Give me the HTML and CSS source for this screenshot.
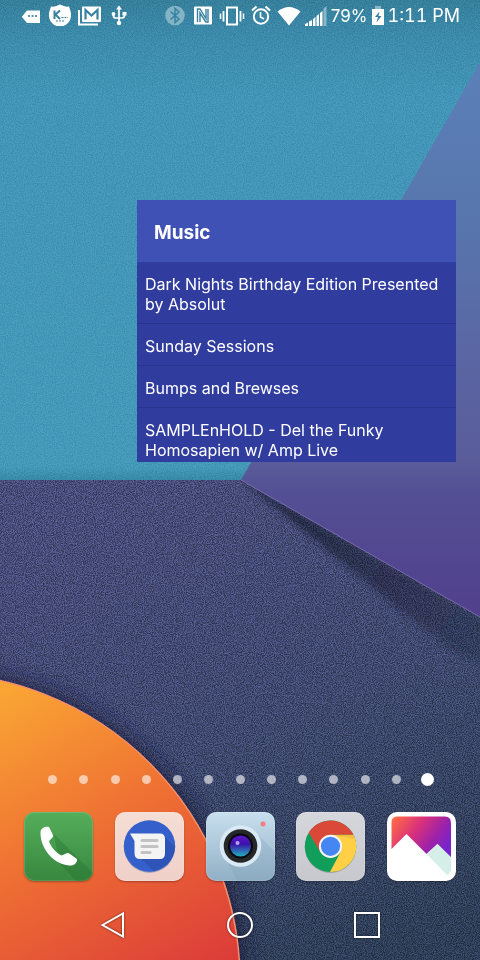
FILE: index.html
```html
<!DOCTYPE html>
<html lang="en">
<head>
<meta charset="utf-8">
<meta name="viewport" content="width=device-width, initial-scale=1">
<title>Home screen</title>
<link rel="stylesheet" href="styles.css">
</head>
<body>
<svg class="wallpaper" viewBox="0 0 480 960" preserveAspectRatio="xMidYMid slice" aria-hidden="true">
  <defs>
    <linearGradient id="teal" x1="0" y1="0" x2="0" y2="1">
      <stop offset="0" stop-color="#367f9b"/><stop offset=".08" stop-color="#3c8bac"/><stop offset=".2" stop-color="#4295b6"/><stop offset=".97" stop-color="#4499b9"/><stop offset="1" stop-color="#3788a5"/>
    </linearGradient>
    <linearGradient id="purple" gradientUnits="userSpaceOnUse" x1="0" y1="62" x2="0" y2="617">
      <stop offset="0" stop-color="#5b80b8"/><stop offset=".3" stop-color="#5875ad"/><stop offset=".55" stop-color="#5a65a2"/><stop offset=".72" stop-color="#5a5c9a"/><stop offset=".77" stop-color="#545095"/><stop offset="1" stop-color="#513f8c"/>
    </linearGradient>
    <linearGradient id="navy" gradientUnits="userSpaceOnUse" x1="160" y1="480" x2="360" y2="960">
      <stop offset="0" stop-color="#484c79"/><stop offset=".5" stop-color="#3f496f"/><stop offset="1" stop-color="#2e3e57"/>
    </linearGradient>
    <linearGradient id="orange" gradientUnits="userSpaceOnUse" x1="0" y1="690" x2="170" y2="990">
      <stop offset="0" stop-color="#faa634"/><stop offset=".5" stop-color="#ee6e33"/><stop offset="1" stop-color="#dc3d39"/>
    </linearGradient>
    <linearGradient id="cast" gradientUnits="userSpaceOnUse" x1="260" y1="500" x2="480" y2="650">
      <stop offset="0" stop-color="#1c2038" stop-opacity=".85"/><stop offset="1" stop-color="#20253d" stop-opacity=".35"/>
    </linearGradient>
    <filter id="soft3" x="-20%" y="-20%" width="140%" height="140%"><feGaussianBlur stdDeviation="3"/></filter>
    <filter id="soft12" x="-20%" y="-20%" width="140%" height="140%"><feGaussianBlur stdDeviation="10"/></filter>
    <filter id="grain" x="0" y="0" width="100%" height="100%" color-interpolation-filters="sRGB">
      <feTurbulence type="fractalNoise" baseFrequency=".9" numOctaves="2" seed="4"/>
      <feColorMatrix values="2.600 0 0 0 -.8  2.600 0 0 0 -.8  2.600 0 0 0 -.8  0 0 0 0 1"/>
    </filter>
    <clipPath id="lower"><path d="M0 480H241L480 617V960H0Z"/></clipPath>
  </defs>
  <rect width="480" height="481" fill="url(#teal)"/>
  <rect class="grain-light" width="480" height="480" filter="url(#grain)"/>
  <rect y="480" width="480" height="480" fill="url(#navy)"/>
  <g clip-path="url(#lower)">
    <path d="M241 480L500 628V670L460 655L400 610L330 552L285 515Z" fill="url(#cast)" filter="url(#soft3)"/>
    <circle cx="-66" cy="981" r="312" fill="#171d38" fill-opacity=".75" filter="url(#soft12)"/>
  </g>
  <rect class="grain-dark" y="480" width="480" height="480" filter="url(#grain)"/>
  <path d="M480 62L241 480L480 617Z" fill="url(#purple)"/>
  <path d="M241 480L480 617" stroke="#7a68ab" fill="none"/>
  <circle cx="-68" cy="981" r="308" fill="url(#orange)" stroke="#f2906c" stroke-width="1.500"/>
</svg>

<div class="phone">
  <header class="status">
    <div class="status-group notices">
      <svg width="20" height="24" viewBox="0 0 20 24" aria-hidden="true"><path d="M5 8.500H18V21H5L0 15V14.500Z" fill="#fff"/><g fill="#38829f"><circle cx="7" cy="14" r="1.100"/><circle cx="10.500" cy="14" r="1.100"/><circle cx="14" cy="14" r="1.100"/></g></svg>
      <svg width="24" height="24" viewBox="0 0 24 24" aria-hidden="true"><path d="M3 4.500C6 5 9 4 12 2.500C15 4 18 5 21 4.500L22.500 9C25 18 19 24.500 12 24.500S-1 18 1.500 9Z" fill="#fff"/><g fill="none" stroke="#38829f"><path d="M6.500 8.500V17M12 8.500L7.500 12.500L12 17" stroke-width="2"/><path d="M13.500 15.500H20M8 19H17" stroke-width="1.200" stroke-dasharray="2 1"/></g></svg>
      <svg width="24" height="24" viewBox="0 0 24 24" aria-hidden="true"><path d="M1 8V22.500H20" fill="none" stroke="#fff" stroke-width="2"/><rect x="4" y="4.500" width="19" height="15.500" rx="1" fill="#fff"/><path d="M7.500 17.500V8L13.500 13.500L19.500 8V17.500" fill="none" stroke="#38829f" stroke-width="2.200"/></svg>
      <svg width="22" height="24" viewBox="0 0 22 24" aria-hidden="true"><g fill="none" stroke="#fff" stroke-width="1.700"><path d="M11 6V22M5.500 12V14Q5.500 16 8 16H14Q16.500 16 16.500 13V11"/></g><path d="M11 3.500L14 7.500H8Z" fill="#fff"/><circle cx="5.500" cy="12" r="1.900" fill="#fff"/><path d="M14.500 10H18.500V13.500H14.500Z" fill="#fff"/><circle cx="11" cy="21" r="2.200" fill="#fff"/></svg>
    </div>
    <div class="status-group readings">
      <svg width="24" height="24" viewBox="0 0 24 24" aria-hidden="true"><circle cx="12" cy="13.500" r="9.800" fill="#82b3c7"/><path d="M7.500 9.500L16 17L12 20.500V6.500L16 10L7.500 17.500" fill="none" stroke="#38829f" stroke-width="1.500"/></svg>
      <svg width="24" height="24" viewBox="0 0 24 24" aria-hidden="true"><rect x="3" y="4.500" width="18" height="18" rx="1" fill="#fff"/><path d="M6.500 20V7H9L15 16.500V7M17 7V20H14.800L9 11V20" fill="none" stroke="#38829f" stroke-width="1.400"/></svg>
      <svg width="26" height="24" viewBox="0 0 26 24" aria-hidden="true"><g fill="none" stroke="#fff"><rect x="8" y="5.500" width="10" height="17" stroke-width="2"/><path d="M4.500 9V19.500M21.500 9V19.500" stroke-width="1.800"/><path d="M1.500 11.500V17M24.500 11.500V17" stroke-width="1.500"/></g></svg>
      <svg width="24" height="24" viewBox="0 0 24 24" aria-hidden="true"><g fill="none" stroke="#fff"><circle cx="12" cy="14.500" r="7.200" stroke-width="2"/><path d="M11.500 10V15L15 17" stroke-width="1.600"/><path d="M3 8.500L7.500 4.500M21 8.500L16.500 4.500" stroke-width="2"/></g></svg>
      <svg width="24" height="24" viewBox="0 0 24 24" aria-hidden="true"><path d="M.5 9.500Q12 .5 23.500 9.500L12 23.500Z" fill="#fff"/></svg>
      <svg width="22" height="24" viewBox="0 0 22 24" aria-hidden="true"><path d="M0 24V22L3 20.500V24ZM4 24V19.500L7 18V24ZM8 24V17L10.500 15V24ZM11.500 24V14L14 12V24ZM15 24V11L17.500 9V24Z" fill="#fff"/><path d="M18.500 24V6.500L21.500 4V24Z" fill="#8ab8ca"/></svg>
      <span>79%</span>
      <svg width="12" height="24" viewBox="1 0 12 24" aria-hidden="true"><path d="M4 4H10V7H4Z" fill="#8ab8ca"/><path d="M1 7H13V23H1Z" fill="#fff"/><path d="M8.500 9.500L4 15H7L5.500 20.500L10.500 14H7.500Z" fill="#38829f"/></svg>
      <time>1:11 PM</time>
    </div>
  </header>

  <main class="desktop">
    <section class="widget" aria-labelledby="widget-title">
      <h1 id="widget-title">Music</h1>
      <ul>
        <li>Dark Nights Birthday Edition Presented by Absolut</li>
        <li>Sunday Sessions</li>
        <li>Bumps and Brewses</li>
        <li>SAMPLEnHOLD - Del the Funky Homosapien w/ Amp Live</li>
      </ul>
    </section>
  </main>

  <div class="pages">
    <i></i><i></i><i></i><i></i><i></i><i></i><i></i><i></i><i></i><i></i><i></i><i></i><i class="current"></i>
  </div>

  <div class="dock">
    <button type="button" class="app phone-app" aria-label="Phone">
      <svg viewBox="0 0 69 69"><path d="M30 22L69 61V69H52L35 51Z" fill="#226f30" opacity=".35"/><path d="M16.500 20C17 16 21 14 25 15L29 23Q29.500 25 27.500 26.500L25 29C27 36 33 41 37.500 43.500L42 41.500Q44 40.500 46 42L53 47C53.500 51 50 54 45 53.500C29 52 16 36 16.500 20Z" fill="#fff"/></svg>
    </button>
    <button type="button" class="app messages-app" aria-label="Messages">
      <svg viewBox="0 0 69 69"><circle cx="34.500" cy="35" r="25.700" fill="#2a50a8" opacity=".45"/><circle cx="34.500" cy="34" r="25.700" fill="#3560cb"/><path d="M49 24L60 35Q58 54 39 59L25 46Z" fill="#284da9" opacity=".6"/><path d="M15 21.500H45Q50 21.500 50 27V41Q50 47 45 47H25Q19.500 47 19.500 41V29Z" fill="#f4f4f4"/><path d="M27 28.500H42M27 34.500H42M27 40.500H35" stroke="#c2c2c2" stroke-width="3.200" stroke-linecap="round"/></svg>
    </button>
    <button type="button" class="app camera-app" aria-label="Camera">
      <svg viewBox="0 0 69 69"><defs><linearGradient id="lens" x1="0" y1="0" x2="0" y2="1"><stop offset="0" stop-color="#6015cf"/><stop offset=".4" stop-color="#3b12aa"/><stop offset="1" stop-color="#22b2c0"/></linearGradient></defs><path d="M51 22L69 40V69H32L20 48Z" fill="#7c9db6" opacity=".25"/><circle cx="34.500" cy="34" r="20.800" fill="#d9eaf4"/><circle cx="34.500" cy="34" r="16.800" fill="#262729"/><circle cx="34.500" cy="34" r="12.500" fill="#08080e"/><circle cx="34.500" cy="34" r="10.500" fill="url(#lens)"/><circle cx="31.500" cy="31" r="2" fill="#b9a3ef"/><circle cx="57" cy="12" r="2.500" fill="#f37d80"/></svg>
    </button>
    <button type="button" class="app chrome-app" aria-label="Chrome">
      <svg viewBox="0 0 69 69"><circle cx="34.500" cy="35.200" r="25.700" fill="#777" opacity=".5"/><circle cx="34.500" cy="34.300" r="25.700" fill="#119e5b"/><path d="M34.500 22.700H57.500A25.700 25.700 0 0 1 34 60L44.500 40Z" fill="#ffcf45"/><path d="M12.700 20.700A25.700 25.700 0 0 1 57.500 22.700H34.500L24 39.500Z" fill="#da4838"/><path d="M35 22.700H57.500L59 27Z" fill="#d8a83d" opacity=".4"/><circle cx="34.500" cy="34.300" r="11.600" fill="#f4f4f4"/><circle cx="34.500" cy="34.300" r="9.600" fill="#4586f3"/></svg>
    </button>
    <button type="button" class="app gallery-app" aria-label="Gallery">
      <svg viewBox="0 0 69 69"><defs><linearGradient id="dusk" x1="0" y1=".1" x2="1" y2=".6"><stop offset="0" stop-color="#ff6b45"/><stop offset=".42" stop-color="#d8307c"/><stop offset=".75" stop-color="#9c22a9"/><stop offset="1" stop-color="#7824cb"/></linearGradient></defs><path d="M4.500 37V10Q4.500 4.500 11 4.500H58Q64 4.500 64 11V46L50.500 32L39.500 42L19.500 22Z" fill="url(#dusk)"/><path d="M39.500 42L50.500 32L64 45V58Q63 62 60 63Z" fill="#d6eee8"/></svg>
    </button>
  </div>

  <nav class="softkeys" aria-label="System">
    <button type="button" aria-label="Back"><svg viewBox="0 0 30 30"><path d="M4.500 15L25 3.500V26.500Z"/></svg></button>
    <button type="button" aria-label="Home"><svg viewBox="0 0 30 30"><circle cx="15" cy="15" r="12"/></svg></button>
    <button type="button" aria-label="Recent apps"><svg viewBox="0 0 30 30"><rect x="3" y="3" width="24" height="24"/></svg></button>
  </nav>
</div>
</body>
</html>
```
FILE: styles.css
```css
* {
  box-sizing: border-box;
}

body {
  margin: 0;
  background: #3d476d;
  color: #fff;
  font-family: Inter, "Noto Sans", sans-serif;
  font-size: 16px;
}

/* The artwork lies behind the whole screen. */
.wallpaper {
  position: fixed;
  inset: 0;
  width: 100%;
  height: 100%;
  z-index: -1;
}

.grain-light {
  mix-blend-mode: overlay;
  opacity: 0.09;
}

.grain-dark {
  mix-blend-mode: overlay;
  opacity: 0.3;
}

.phone {
  display: flex;
  flex-direction: column;
  min-height: 100vh;
}

.status {
  display: flex;
  justify-content: space-between;
  align-items: center;
  height: 32px;
  padding: 0 20px 4px 22px;
  font-size: 17px;
  white-space: nowrap;
}

.status svg {
  flex: none;
}

.status-group {
  display: flex;
  align-items: center;
}

.status span,
.status time {
  line-height: 24px;
  padding-top: 4px;
}

.status time {
  font-size: 18px;
  font-variant-numeric: tabular-nums;
}

.notices {
  gap: 6px;
}

.readings {
  gap: 4px;
}

.desktop {
  flex: 1;
  padding: 168px 24px 24px 137px;
}

.widget {
  height: 262px;
  overflow: hidden;
  background: #303d9e;
}

.widget h1 {
  margin: 0;
  padding: 3px 17px 0;
  background: #4051b5;
  font-size: 19px;
  line-height: 59px;
}

.widget ul {
  margin: 0;
  padding: 0;
  list-style: none;
}

.widget li {
  padding: 12px 8px 9px;
  border-bottom: 1px solid #29348f;
  line-height: 20px;
}

.pages {
  display: flex;
  justify-content: space-between;
  align-items: center;
  height: 14px;
  margin-bottom: 26px;
  padding: 0 46px;
}

/* Every marker takes the same room; the clear border makes the idle ones smaller. */
.pages i {
  width: 13px;
  height: 13px;
  border: 2px solid transparent;
  border-radius: 50%;
  background: rgb(255 255 255 / 0.6) padding-box;
}

.pages .current {
  border-color: #fff;
  background: #fff;
}

.dock {
  display: flex;
  justify-content: space-between;
  padding: 0 24px;
}

button {
  border: 0;
  padding: 0;
  background: none;
}

.app {
  width: 69px;
  height: 69px;
  border-radius: 10px;
  overflow: hidden;
  box-shadow: 0 1px 2px rgb(0 0 0 / 0.3), inset 0 0 1px 1px rgb(255 255 255 / 0.15);
}

.app svg {
  display: block;
  width: 100%;
}

.phone-app {
  background: linear-gradient(#55ae5b, #38883f);
}

.messages-app {
  background: linear-gradient(#f5ded5, #f0d0c8);
}

.camera-app {
  background: linear-gradient(#c8dfee, #91b0c5);
}

.chrome-app {
  background: linear-gradient(#d5d7dd, #c6c8ce);
}

.gallery-app {
  background: #fff;
}

.softkeys {
  display: grid;
  grid-template-columns: repeat(3, 1fr);
  justify-items: center;
  padding: 29px 50px 20px;
}

.softkeys svg {
  display: block;
  width: 30px;
  height: 30px;
  fill: none;
  stroke: #fff;
  stroke-width: 2;
  filter: drop-shadow(0 0 1px rgb(0 0 0 / 0.6));
}
```
